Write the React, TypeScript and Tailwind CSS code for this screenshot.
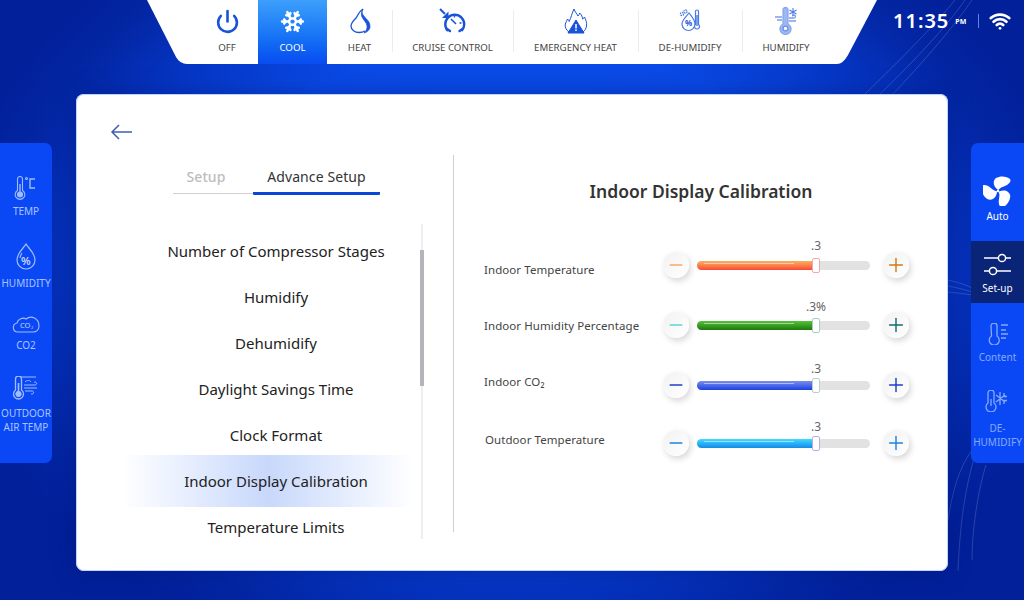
import { Minus, Plus, Power, Snowflake, Wifi } from 'lucide-react'
import type { ReactNode } from 'react'

const Heat = () => (
  <svg width="22" height="26" viewBox="0 0 22 26" fill="none" stroke="#1a52d8" strokeWidth="1.300">
    <path d="M14 1C9 4 9 8 7 10 4 13 2 15 2 18c0 4 4 6.500 8 6.500 2 0 4-.3 6-1.500" />
    <path d="M14 1c-2 3-.5 5.500 1.500 8 3 3 5.500 5 5.500 9.500 0 3-2.500 5.500-6 6.500 2.500-2.500 3.500-4.500 3-7.500-.5-3-3.500-5.500-5-8.500C12 6 12.500 3 14 1Z" fill="#1a52d8" strokeWidth=".8" />
  </svg>
)

const Cruise = () => (
  <svg width="28" height="26" viewBox="0 0 28 26" fill="none" stroke="#1a52d8" strokeWidth="2.400">
    <path d="M9 23a9.500 9.500 0 1 1 13.500 0" />
    <path d="M8 21l3 2M23.500 21l-3 2" strokeLinecap="round" />
    <path d="M12 11l5 5" strokeWidth="1.600" />
    <path d="M15.500 7v2.500M22.500 15h-2" strokeWidth="1.300" />
    <path d="M1 1l5 5" strokeWidth="2" />
    <path d="M9.500 3.500v6.500H3z" fill="#1a52d8" stroke="none" />
  </svg>
)

const Emergency = () => (
  <svg width="24" height="26" viewBox="0 0 24 26" fill="none" stroke="#1a52d8" strokeWidth="1">
    <path d="M5 24C2 22 .8 19 1.300 16c.5-2 1.700-3 2.200-5 1 .8 1.500 1.500 1.700 2.500C7 10 8 5 10 1c1 3 3 5 4 7 1-1 1.500-2 1.700-3 2 2 2.800 4 2.800 6 1-.5 1.500-1 2-2 1.500 3 2.500 6 2 9-.3 2.500-1.500 4.500-3.500 6" />
    <path d="M12 12 20 25H4Z" fill="#1a52d8" stroke="#1a52d8" strokeLinejoin="round" />
    <path d="M12 16v4.500M12 21.500v1.500" stroke="#fff" strokeWidth="1.500" />
  </svg>
)

const DeHumidify = () => (
  <svg width="22" height="26" viewBox="0 0 22 26" fill="none" stroke="#4a7ae6" strokeWidth="1.200">
    <path d="M10 5c3 4 6 7 6 11a6.500 6.500 0 0 1-13 0c0-4 4-7 7-11Z" />
    <path d="M16.500 3.500a1.500 1.500 0 0 1 3 0v13a2.500 2.500 0 1 1-3 0Z" fill="#fff" />
    <path d="M18 7v11" strokeWidth="1.400" />
    <circle cx="3" cy="6" r="1.600" strokeDasharray="1.500 .7" />
    <circle cx="6.500" cy="3.500" r="1.600" strokeDasharray="1.500 .7" />
    <text x="6" y="18" fontSize="8" fontWeight="700" fill="#2a5ad8" stroke="none" fontFamily="Noto Sans">%</text>
  </svg>
)

const Humidify = () => (
  <svg width="24" height="28" viewBox="0 0 24 28" fill="none" stroke="#8aa8ee" strokeWidth="1.300">
    <path d="M9 3a2.500 2.500 0 0 1 5 0v14a5.500 5.500 0 1 1-5 0Z" fill="#9db8f3" />
    <circle cx="11.500" cy="21.500" r="2.400" fill="#fff" stroke="#6b8fe8" />
    <path d="M1 10h7M3 13h5M15 11h5a1.500 1.500 0 1 0-1.500-1.500M15 14h7" stroke="#7c9de9" />
    <path d="M19 1v8M15.500 3l7 4M22.500 3l-7 4" stroke="#4f7fe6" strokeWidth="1.100" />
  </svg>
)

const Temp = () => (
  <svg width="26" height="24" viewBox="0 0 26 24" fill="none" stroke="#9fbcff" strokeWidth="1.100">
    <path d="M4.500 3a2.500 2.500 0 0 1 5 0v11.500a4.800 4.800 0 1 1-5 0Z" />
    <circle cx="7" cy="18.500" r="2.500" fill="#9fbcff" />
    <path d="M7 8v8" strokeWidth="1.400" />
    <circle cx="13.500" cy="2.500" r="1" />
    <path d="M22 3h-5v9h5" strokeWidth="1.400" />
  </svg>
)

const Drop = () => (
  <svg width="22" height="28" viewBox="0 0 22 28" fill="none" stroke="#9fbcff" strokeWidth="1.200">
    <path d="M11 1c3 5 9 9 9 16a9 9 0 0 1-18 0C2 10 8 6 11 1Z" />
    <path d="M5 15c.3-2 1-3.500 2-5" />
    <text x="6" y="22" fontSize="11" fontWeight="600" fill="#c8d9ff" stroke="none" fontFamily="Noto Sans">%</text>
  </svg>
)

const Cloud = () => (
  <svg width="28" height="20" viewBox="0 0 28 20" fill="none" stroke="#9fbcff" strokeWidth="1.100">
    <path d="M6 18c-6 0-6-8-1-9 1-4 6-6 9-4 5-4 13-1 13 7 0 4-3 6-6 6Z" />
    <text x="8" y="14" fontSize="7.500" fill="#c8d9ff" stroke="none" fontFamily="Noto Sans">CO</text>
    <text x="19" y="15" fontSize="4" fill="#c8d9ff" stroke="none" fontFamily="Noto Sans">2</text>
  </svg>
)

const Outdoor = () => (
  <svg width="26" height="24" viewBox="0 0 26 24" fill="none" stroke="#9fbcff" strokeWidth="1">
    <path d="M2.500 3a3 3 0 0 1 6 0v11a5 5 0 1 1-6 0Z" strokeWidth="1.300" />
    <circle cx="5.500" cy="18" r="2.700" fill="#9fbcff" />
    <path d="M5.500 7v9" strokeWidth="1.600" />
    <path d="M8 1h15" />
    <path d="M12 6c2-2 5-2 6 0M11 9h11a1.500 1.500 0 1 0-1-2.500M11 12h13M12 15h7a1.500 1.500 0 1 1-1 2.500" />
  </svg>
)

const Fan = () => (
  <svg width="30" height="30" viewBox="0 0 30 30" fill="#fff">
    {[0, 120, 240].map((angle) => (
      <path
        key={angle}
        transform={`rotate(${angle} 15 15)`}
        d="M14.500 13.500C10 10 9.500 5 13 2c4-2.500 11-2 14 1 1.500 2.500-1 5-4 6.500-3 1.300-6 2-7 4-.5.500-1 .5-1.500 0Z"
      />
    ))}
    <circle cx="15" cy="15" r="1.200" />
  </svg>
)

const Sliders = () => (
  <svg width="28" height="26" viewBox="0 0 28 26" fill="none" stroke="#fff" strokeWidth="1.500">
    <path d="M0 6h14M22 6h5M0 19h5M13 19h14" />
    <circle cx="18" cy="6" r="3.600" />
    <circle cx="9" cy="19" r="3.600" />
  </svg>
)

const Content = () => (
  <svg width="24" height="22" viewBox="0 0 24 22" fill="none" stroke="#86a9fb" strokeWidth="1.300">
    <path d="M5 3a3 3 0 0 1 6 0v10a5 5 0 1 1-5.500 0Z" />
    <path d="M15 2h7M15 7h5M15 11h7M15 15h5" />
  </svg>
)

const DeHumidifyRail = () => (
  <svg width="24" height="22" viewBox="0 0 24 22" fill="none" stroke="#86a9fb" strokeWidth="1.300">
    <path d="M3 3a3 3 0 0 1 6 0v10a5 5 0 1 1-6 0Z" />
    <path d="M6 9v7" />
    <path d="M15 2v13M11 5l9 7M11 12l9-7M19 3v3.500h3M19 14v-3.500h3" />
  </svg>
)

const navItems: { label: string; icon: ReactNode; width: string; split?: boolean }[] = [
  { label: 'OFF', icon: <Power size={25} strokeWidth={2.5} color="#1a52d8" />, width: 'w-[62px]' },
  { label: 'COOL', icon: <Snowflake size={25} strokeWidth={2.400} color="#fff" />, width: 'w-[69px]' },
  { label: 'HEAT', icon: <Heat />, width: 'w-[65px]', split: true },
  { label: 'CRUISE CONTROL', icon: <Cruise />, width: 'w-[121px]', split: true },
  { label: 'EMERGENCY HEAT', icon: <Emergency />, width: 'w-[125px]', split: true },
  { label: 'DE-HUMIDIFY', icon: <DeHumidify />, width: 'w-[104px]', split: true },
  { label: 'HUMIDIFY', icon: <Humidify />, width: 'w-[88px]' },
]

const menu = [
  'Number of Compressor Stages',
  'Humidify',
  'Dehumidify',
  'Daylight Savings Time',
  'Clock Format',
  'Indoor Display Calibration',
  'Temperature Limits',
]

const calibrations = [
  {
    label: 'Indoor Temperature',
    value: '.3',
    row: 'h-[60px]',
    labelTop: 'mt-[10px]',
    valueTop: 'top-[-23px]',
    fill: 'from-[#f3b060] to-[#fb4436]',
    thumb: 'border-[#f0a8a8]',
    minus: 'text-[#f6ab62]',
    plus: 'text-[#d27a16]',
  },
  {
    label: 'Indoor Humidity Percentage',
    value: '.3%',
    row: 'h-[60px]',
    labelTop: 'mt-[6px]',
    valueTop: 'top-[-22px]',
    fill: 'from-[#55c43c] to-[#1f7708]',
    thumb: 'border-[#a8d0c8]',
    minus: 'text-[#5ed6d2]',
    plus: 'text-[#126f6f]',
  },
  {
    label: 'Indoor CO₂',
    value: '.3',
    row: 'h-[58px]',
    labelTop: 'mt-[2px]',
    valueTop: 'top-[-20px]',
    fill: 'from-[#7d8cec] to-[#1d3ce0]',
    thumb: 'border-[#b0d4c8]',
    minus: 'text-[#1e40c8]',
    plus: 'text-[#1e40c8]',
  },
  {
    label: 'Outdoor Temperature',
    value: '.3',
    row: 'h-[58px]',
    labelTop: 'mt-[2px] pl-px',
    valueTop: 'top-[-20px]',
    fill: 'from-[#3edcff] to-[#1a88e8]',
    thumb: 'border-[#bcaedc]',
    minus: 'text-[#1f84e0]',
    plus: 'text-[#1f84e0]',
  },
]

const RoundButton = ({ tone, children }: { tone: string; children: ReactNode }) => (
  <div
    className={`flex h-[26px] w-[26px] shrink-0 items-center justify-center rounded-full bg-gradient-to-br from-[#f2f2f2] to-white shadow-[2px_3px_6px_rgba(0,0,0,0.16)] ${tone}`}
  >
    {children}
  </div>
)

const CalibrationRow = ({ item }: { item: (typeof calibrations)[number] }) => (
  <div className={`flex items-start ${item.row}`}>
    <div className={`w-[179px] text-[11.5px] leading-[16px] tracking-[0.07px] text-[#444] ${item.labelTop}`}>
      {item.label}
    </div>
    <div className="flex items-center">
      <RoundButton tone={item.minus}>
        <Minus size={20} strokeWidth={1.7} />
      </RoundButton>
      <div className="relative ml-[8px] mr-[13px] h-[9px] w-[173px] rounded-full bg-[#e2e2e2]">
        <div className={`relative h-full w-[119px] rounded-full bg-gradient-to-b ${item.fill}`}>
          <div className="absolute left-[7px] top-[2px] h-px w-[90px] bg-white/50" />
        </div>
        <div className={`absolute left-[115px] top-[-3px] h-[15px] w-[8px] rounded-[2px] border bg-white ${item.thumb}`} />
        <div className={`absolute left-[99px] w-[40px] text-center text-[12px] leading-[16px] text-[#666] ${item.valueTop}`}>
          {item.value}
        </div>
      </div>
      <RoundButton tone={item.plus}>
        <Plus size={22} strokeWidth={1.6} />
      </RoundButton>
    </div>
  </div>
)

const RailItem = ({ icon, label, tone, className }: { icon: ReactNode; label: ReactNode; tone: string; className: string }) => (
  <div className={`flex flex-col items-center text-center text-[10px] leading-[14px] ${tone} ${className}`}>
    {icon}
    {label}
  </div>
)

export default function App() {
  return (
    <div
      className="relative flex h-[600px] w-[1024px] flex-col overflow-hidden bg-[radial-gradient(ellipse_560px_420px_at_50%_45%,#0a50f0_0%,#0a4ae6_55%,#0536c4_75%,#0326a4_90%,#02209a_100%)] text-[#333]"
      style={{ fontFamily: '"Noto Sans", "Open Sans", sans-serif' }}
    >
      {/* thin arcs behind the clock and down the right edge */}
      <svg className="absolute inset-0" width="1024" height="600" fill="none" stroke="#ffffff" strokeOpacity="0.16">
        <path d="M865 94C900 60 935 25 955 0M880 94C915 60 948 25 965 0M893 94C925 60 955 25 972 0" />
        <path d="M948 280c12 3 18 5 24 8M948 286c10 2 18 4 24 6M948 292c10 1 18 2 24 3" />
        <path d="M948 520c5-30 10-50 24-70M958 571c2-50 8-90 20-125M972 560c0-30 6-70 14-95" />
      </svg>

      <header className="relative flex h-16 shrink-0">
        <nav className="ml-[147px] flex h-16 w-[730px] bg-white pl-[49px] [clip-path:path('M0_0H730L701_55Q696_64_690_64H40Q33_64_29_57Z')]">
          {navItems.map((item) => (
            <div
              key={item.label}
              className={`relative flex h-16 shrink-0 flex-col items-center pt-[7px] ${item.width} ${
                item.label === 'COOL' ? 'bg-gradient-to-b from-[#3d9ffb] to-[#0a4bf0] text-white' : 'text-[#444]'
              }`}
            >
              <div className="flex h-[28px] items-center">{item.icon}</div>
              <div className="mt-[6px] text-[9.7px] leading-[14px]">{item.label}</div>
              {item.split && <div className="absolute right-[-1px] top-[10px] z-10 h-[42px] w-px bg-[#ececec]" />}
            </div>
          ))}
        </nav>
        <div className="ml-[16px] flex h-[42px] items-center text-white">
          <span className="text-[20px] font-semibold tracking-[1px]">11:35</span>
          <span className="ml-[6px] mt-[3px] text-[7px] font-bold">PM</span>
          <span className="ml-[12px] h-[14px] w-px bg-[#5f86e0]" />
          <Wifi size={22} strokeWidth={3} className="ml-[10px]" />
        </div>
      </header>

      <main className="relative flex">
        <aside className="mt-[79px] flex h-[320px] w-[52px] shrink-0 flex-col items-center rounded-r-[7px] bg-[#0a48f5] pt-[33px]">
          <RailItem icon={<Temp />} label="TEMP" tone="text-[#a9c4ff]" className="h-[67px] gap-[4px]" />
          <RailItem icon={<Drop />} label="HUMIDITY" tone="text-[#a9c4ff]" className="h-[71px] gap-[5px]" />
          <RailItem icon={<Cloud />} label="CO2" tone="text-[#a9c4ff]" className="h-[62px] gap-[4px]" />
          <RailItem
            icon={<Outdoor />}
            label={
              <>
                OUTDOOR
                <br />
                AIR TEMP
              </>
            }
            tone="text-[#a9c4ff]"
            className="gap-[6px]"
          />
        </aside>

        <section className="ml-[24px] mt-[30px] flex h-[477px] w-[872px] shrink-0 rounded-[8px] bg-white shadow-[inset_0_0_0_1px_rgba(170,200,255,0.8),0_0_24px_rgba(0,20,110,0.45)]">
          <div className="w-[377px] shrink-0">
            <svg className="ml-[34px] mt-[30px]" width="23" height="16" viewBox="0 0 23 16" fill="none" stroke="#3f5fb5" strokeWidth="1.500">
              <path d="M22 8H2M9 1 2 8l7 7" />
            </svg>
            <div className="ml-[97px] mt-[26px] flex w-[207px] text-[14px] tracking-[0.1px]">
              <div className="h-[28px] w-[80px] border-b border-[#d0d0d0] pr-[14px] text-center font-medium text-[#bdbdbd]">Setup</div>
              <div className="h-[29px] w-[127px] rounded-b-[1px] border-b-[3px] border-[#0a46d8] text-center text-[#333]">Advance Setup</div>
            </div>
            <div className="relative ml-[46px] mt-[29px] h-[315px] w-[301px] border-r-2 border-[#eeeeee] pt-[4px]">
              <div className="absolute right-[-3px] top-[26px] h-[136px] w-[4px] bg-[#b4b4bc]" />
              {menu.map((label) => (
                <div
                  key={label}
                  className={
                    label === 'Indoor Display Calibration'
                      ? 'my-[-3px] flex h-[52px] w-[292px] items-center justify-center bg-gradient-to-r from-white via-[#c8d8fb] to-white pl-[16px] text-[15px] text-[#222]'
                      : 'flex h-[46px] w-[292px] items-center justify-center pl-[16px] text-[15px] text-[#222]'
                  }
                >
                  {label}
                </div>
              ))}
            </div>
          </div>

          <div className="mt-[61px] h-[377px] w-px shrink-0 bg-[#cfcfcf]" />

          <div className="flex-1">
            <h1 className="mt-[84px] text-center text-[17.5px] font-semibold leading-[26px] text-[#333]">
              Indoor Display Calibration
            </h1>
            <div className="ml-[30px] mt-[48px]">
              {calibrations.map((item) => (
                <CalibrationRow key={item.label} item={item} />
              ))}
            </div>
          </div>
        </section>

        <aside className="ml-[23px] mt-[79px] flex h-[320px] w-[53px] shrink-0 flex-col items-center rounded-l-[7px] bg-[#0a48f5] pt-[33px]">
          <RailItem icon={<Fan />} label="Auto" tone="text-white" className="h-[65px] gap-[3px]" />
          <div className="flex h-[62px] w-full flex-col items-center justify-center gap-[3px] bg-[#0a2478] pt-[2px] text-[10px] leading-[14px] text-white">
            <Sliders />
            Set-up
          </div>
          <RailItem icon={<Content />} label="Content" tone="mt-[20px] text-[#86a9fb]" className="h-[67px] gap-[5px]" />
          <RailItem
            icon={<DeHumidifyRail />}
            label={
              <>
                DE-
                <br />
                HUMIDIFY
              </>
            }
            tone="text-[#86a9fb]"
            className="gap-[9px]"
          />
        </aside>
      </main>
    </div>
  )
}
